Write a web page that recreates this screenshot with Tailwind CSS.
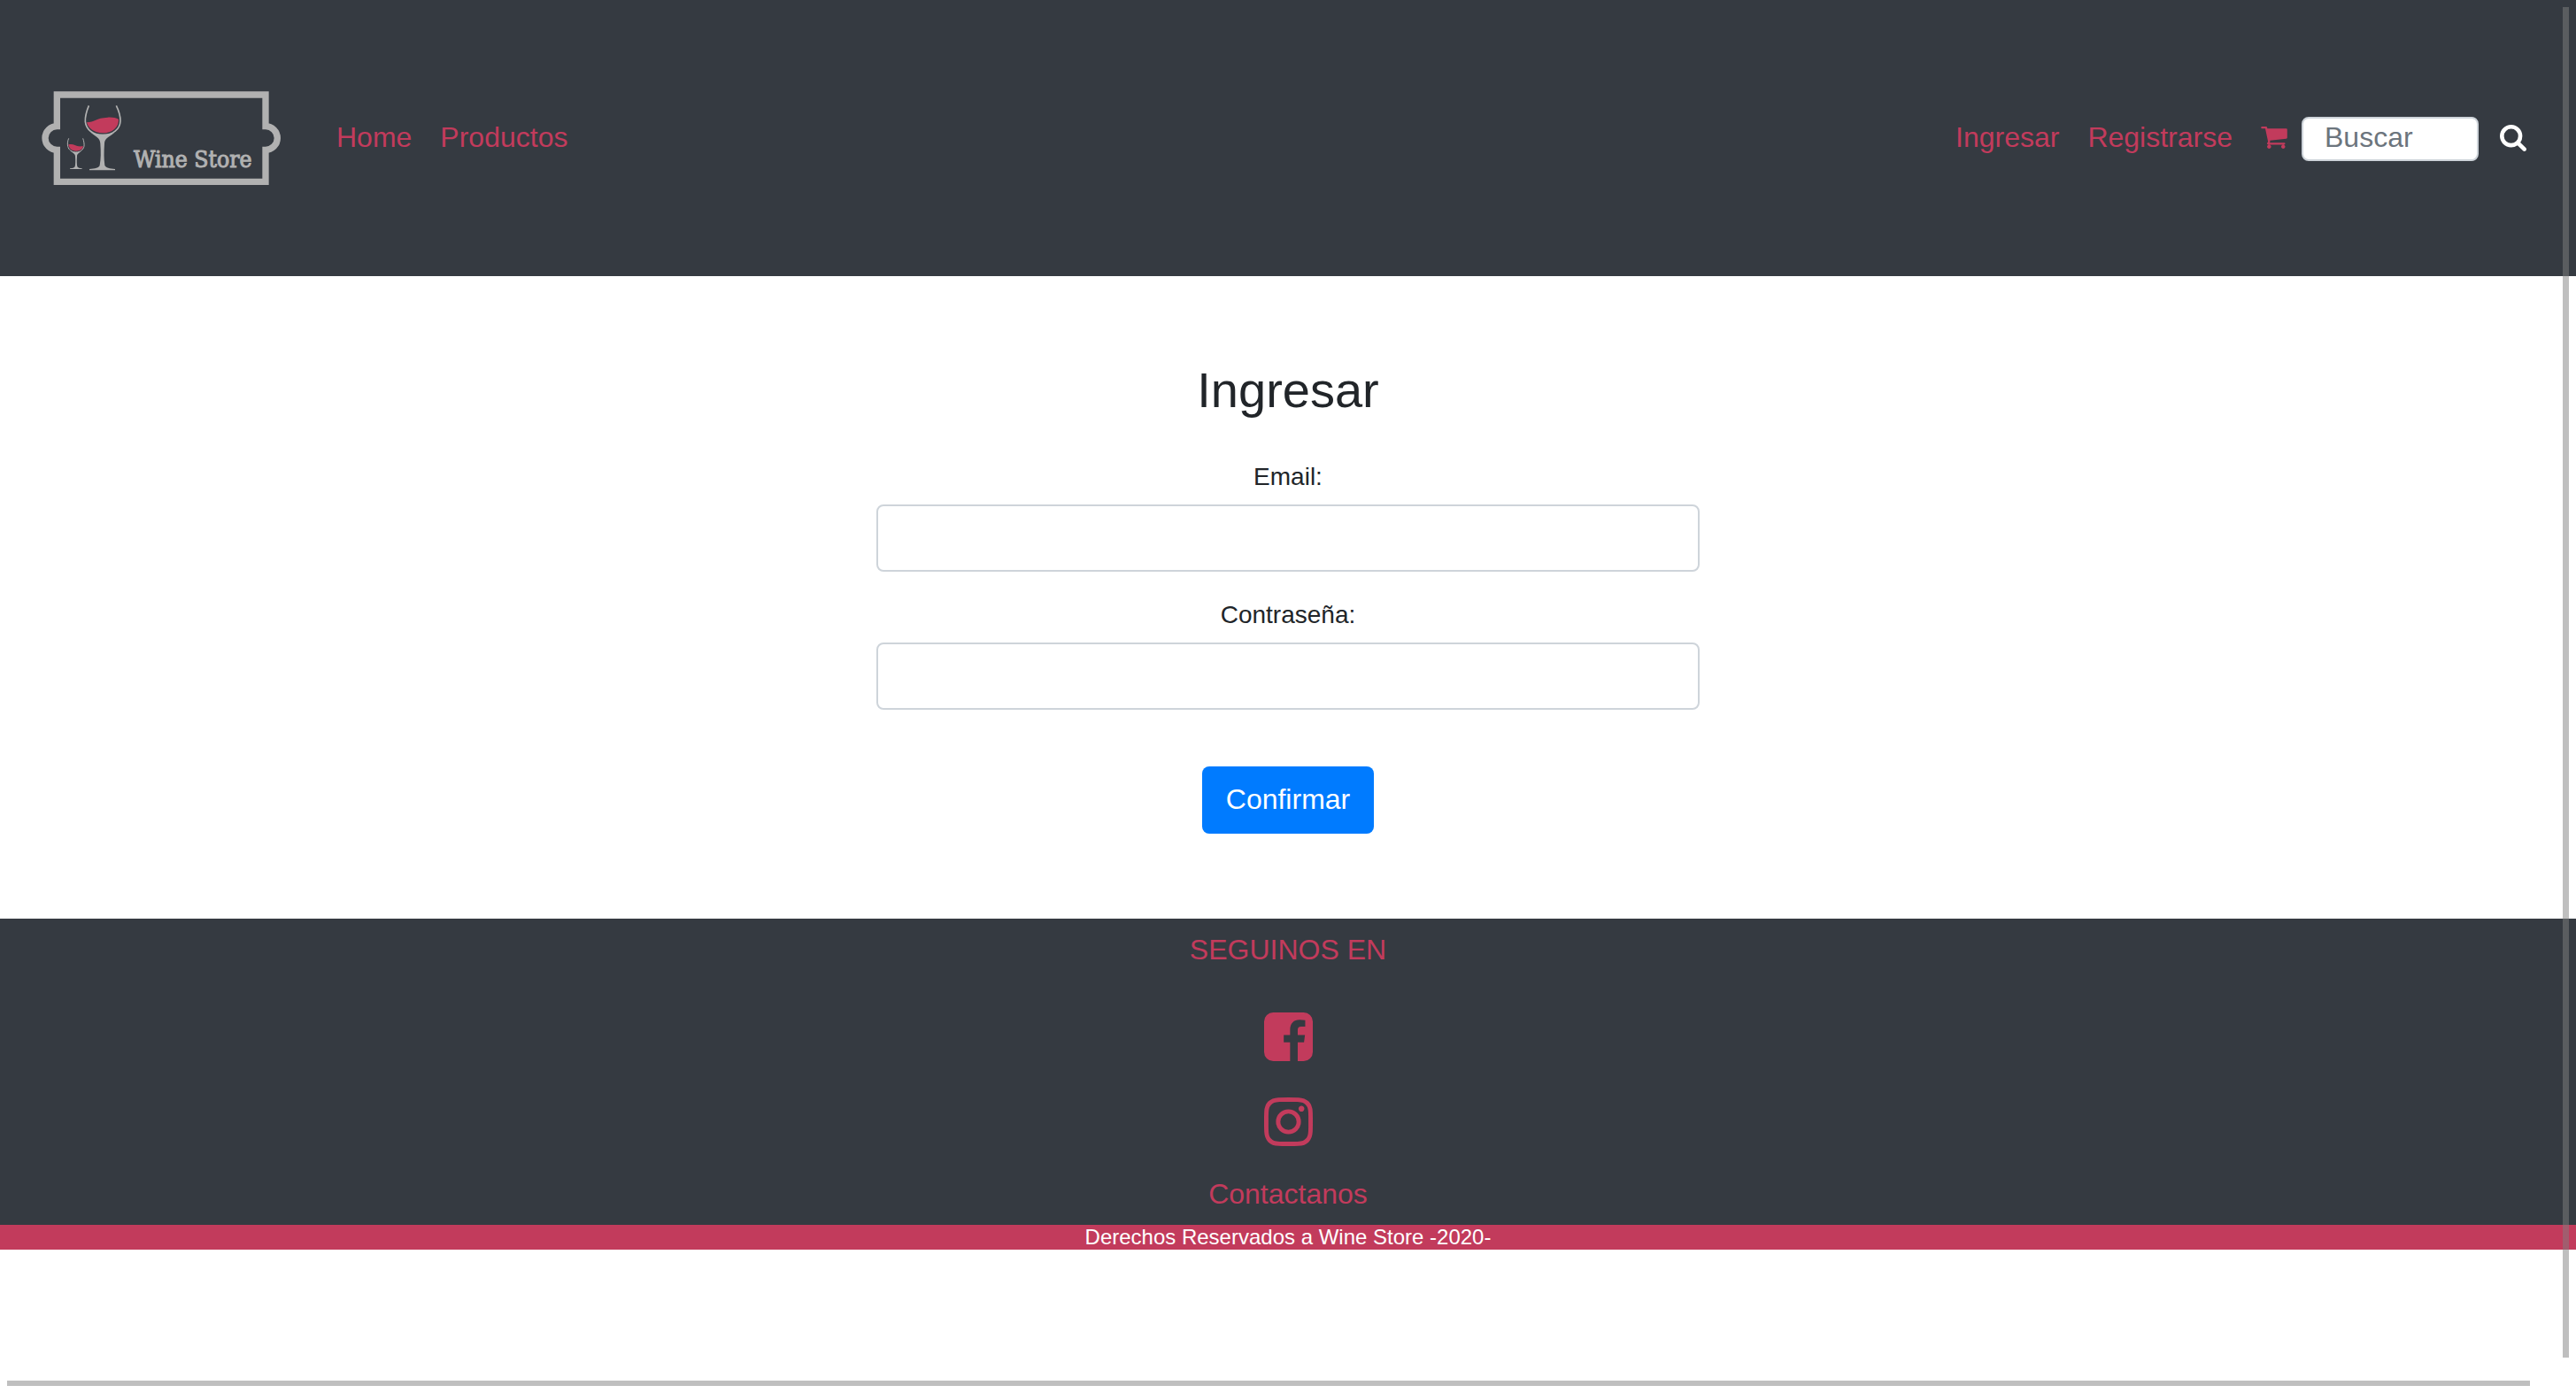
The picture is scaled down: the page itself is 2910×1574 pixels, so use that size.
<!DOCTYPE html>
<html lang="es">
<head>
<meta charset="utf-8">
<meta name="viewport" content="width=device-width, initial-scale=1">
<title>Wine Store - Ingresar</title>
<script src="https://cdn.jsdelivr.net/npm/@tailwindcss/browser@4"></script>
</head>
<body class="min-h-screen bg-white font-['Liberation_Sans',Arial,sans-serif] text-[32px] leading-[48px] text-[#212529]">

<header class="flex h-[312px] items-center gap-8 bg-[#353a41] px-8 text-[#c23b5c]">
  <a href="#" aria-label="Wine Store">
    <svg class="h-[152px] w-[316px]" viewBox="6 0 948 456" fill="none">
      <path d="M103 81H810V188A40 40 0 0 1 810 268V376H103V268A40 40 0 0 1 103 188Z" stroke="#b1b1b1" stroke-width="22"/>
      <!-- large glass -->
      <path d="M204 175C230 174 235 160 275 158C292 157 302 160 312 164C313 192 290 211 258 211C228 211 208 194 204 175Z" fill="#c23b5c"/>
      <path d="M211 118C202 140 198 155 199 172C202 200 226 218 258 218C292 218 317 198 318 170C318 152 313 136 304 118" stroke="#b1b1b1" stroke-width="5"/>
      <path d="M218 209C236 217 280 217 298 209C278 226 265 228 264 246C262 275 262 300 265 320C268 329 282 331 300 333V337H213V333C232 331 246 329 248 320C252 300 252 275 250 246C249 228 236 224 218 209Z" fill="#b1b1b1"/>
      <!-- small glass -->
      <path d="M142 250C158 246 165 254 176 256C184 257 188 255 192 256C190 267 181 272 168 272C153 272 144 264 142 250Z" fill="#c23b5c"/>
      <path d="M143 229C139 238 138 247 140 256C143 268 153 276 167 276C182 276 192 268 195 256C196 247 194 238 191 229" stroke="#b1b1b1" stroke-width="3"/>
      <path d="M150 272C160 277 176 277 185 272C176 280 171 281 171 290C170 305 170 315 172 325C174 329 180 330 188 331V333H147V331C156 330 162 329 164 325C166 315 166 305 165 290C165 281 159 280 150 272Z" fill="#b1b1b1"/>
      <text x="363" y="327" font-family="'DejaVu Serif Condensed','DejaVu Serif',serif" font-size="79" fill="#b1b1b1" stroke="#b1b1b1" stroke-width="3">Wine Store</text>
    </svg>
  </a>
  <nav class="flex flex-1 items-center justify-between pb-0.5">
    <div class="flex gap-8">
      <a href="#">Home</a>
      <a href="#">Productos</a>
    </div>
    <div class="flex items-center gap-8">
      <a href="#">Ingresar</a>
      <a href="#">Registrarse</a>
      <a href="#" aria-label="Carrito">
        <svg class="h-[25px] w-[30px]" viewBox="64 256 1664 1408" fill="currentColor"><path d="M704 1536q0 52-38 90t-90 38-90-38-38-90 38-90 90-38 90 38 38 90zm896 0q0 52-38 90t-90 38-90-38-38-90 38-90 90-38 90 38 38 90zm128-1088v512q0 24-16.5 42.5t-40.5 21.5l-1044 122q13 60 13 70 0 16-24 64h920q26 0 45 19t19 45-19 45-45 19h-1024q-26 0-45-19t-19-45q0-11 8-31.5t16-36 21.5-40 15.5-29.5l-177-823h-204q-26 0-45-19t-19-45 19-45 45-19h256q16 0 28.5 6.5t19.5 15.5 13 24.5 8 26 5.5 29.5 4.5 26h1201q26 0 45 19t19 45z"/></svg>
      </a>
    </div>
  </nav>
  <form class="-ml-4 flex items-center pt-0.5" role="search">
    <input type="search" aria-label="Buscar" placeholder="Buscar" class="h-[50px] w-[200px] rounded-lg border-2 border-[#ced4da] bg-white px-6 pb-1 leading-9 text-[#495057] placeholder:text-[#6c757d]">
    <button type="button" aria-label="Buscar" class="px-6 pb-0.5 text-white">
      <svg class="size-[30px]" viewBox="64 128 1664 1664" fill="currentColor"><path d="M1216 832q0-185-131.5-316.5t-316.5-131.5-316.5 131.5-131.5 316.5 131.5 316.5 316.5 131.5 316.5-131.5 131.5-316.5zm512 832q0 52-38 90t-90 38q-54 0-90-38l-343-342q-179 124-399 124-143 0-273.5-55.5t-225-150-150-225-55.5-273.5 55.5-273.5 150-225 225-150 273.5-55.5 273.5 55.5 225 150 150 225 55.5 273.5q0 220-124 399l343 343q37 37 37 90z"/></svg>
    </button>
  </form>
</header>

<main class="mx-auto w-1/3 px-5 py-24 text-center">
  <h1 class="mb-10 text-[56px] leading-[66px]">Ingresar</h1>
  <form class="flex flex-col items-center gap-6">
    <div class="flex w-full flex-col gap-2">
      <label for="email" class="pt-0.5 text-[28px] leading-[46px]">Email:</label>
      <input id="email" type="email" class="h-[76px] w-full rounded-lg border-2 border-[#ced4da] bg-white px-6">
    </div>
    <div class="flex w-full flex-col gap-2">
      <label for="password" class="pt-0.5 text-[28px] leading-[46px]">Contraseña:</label>
      <input id="password" type="password" class="h-[76px] w-full rounded-lg border-2 border-[#ced4da] bg-white px-6">
    </div>
    <button type="button" class="mt-10 h-[76px] rounded-lg bg-[#007bff] px-[27px] pb-0.5 text-white">Confirmar</button>
  </form>
</main>

<footer class="text-center">
  <div class="flex flex-col items-center bg-[#353a41] py-[11px] text-[#c23b5c]">
    <p>SEGUINOS EN</p>
    <div class="mt-[47px] mb-[30px] flex flex-col gap-[41px]">
      <a href="#" aria-label="Facebook">
        <svg class="size-[55px]" viewBox="128 128 1536 1536" fill="currentColor"><path d="M1376 128q119 0 203.5 84.5t84.5 203.5v960q0 119-84.5 203.5t-203.5 84.5h-188v-595h199l30-232h-229v-148q0-56 23.5-84t91.5-28l122-1v-207q-63-9-178-9-136 0-217.5 80t-81.5 226v171h-200v232h200v595h-532q-119 0-203.5-84.5t-84.5-203.5v-960q0-119 84.5-203.5t203.5-84.5h960z"/></svg>
      </a>
      <a href="#" aria-label="Instagram">
        <svg class="size-[55px]" viewBox="128 128 1536 1536" fill="currentColor"><path d="M1152 896q0-106-75-181t-181-75-181 75-75 181 75 181 181 75 181-75 75-181zm138 0q0 164-115 279t-279 115-279-115-115-279 115-279 279-115 279 115 115 279zm108-410q0 38-27 65t-65 27-65-27-27-65 27-65 65-27 65 27 27 65zm-502-220q-7 0-76.5-.5t-105.5 0-96.5 3-103 10-71.5 18.5q-50 20-88 58t-58 88q-11 29-18.5 71.5t-10 103-3 96.5 0 105.5.5 76.5-.5 76.5 0 105.5 3 96.5 10 103 18.5 71.5q20 50 58 88t88 58q29 11 71.5 18.5t103 10 96.5 3 105.5 0 76.5-.5 76.5.5 105.5 0 96.5-3 103-10 71.5-18.5q50-20 88-58t58-88q11-29 18.5-71.5t10-103 3-96.5 0-105.5-.5-76.5.5-76.5 0-105.5-3-96.5-10-103-18.5-71.5q-20-50-58-88t-88-58q-29-11-71.5-18.5t-103-10-96.5-3-105.5 0-76.5.5zm768 630q0 229-5 317-10 208-124 322t-322 124q-88 5-317 5t-317-5q-208-10-322-124t-124-322q-5-88-5-317t5-317q10-208 124-322t322-124q88-5 317-5t317 5q208 10 322 124t124 322q5 88 5 317z"/></svg>
      </a>
    </div>
    <a href="#">Contactanos</a>
  </div>
  <p class="bg-[#c23b5c] text-2xl leading-7 text-white">Derechos Reservados a Wine Store -2020-</p>
</footer>

<!-- overlay scrollbar thumbs -->
<div class="fixed top-2 right-2 bottom-10 w-[7px] bg-[#808080]/50"></div>
<div class="fixed right-[52px] bottom-2 left-2 h-[6px] bg-[#808080]/50"></div>
</body>
</html>
